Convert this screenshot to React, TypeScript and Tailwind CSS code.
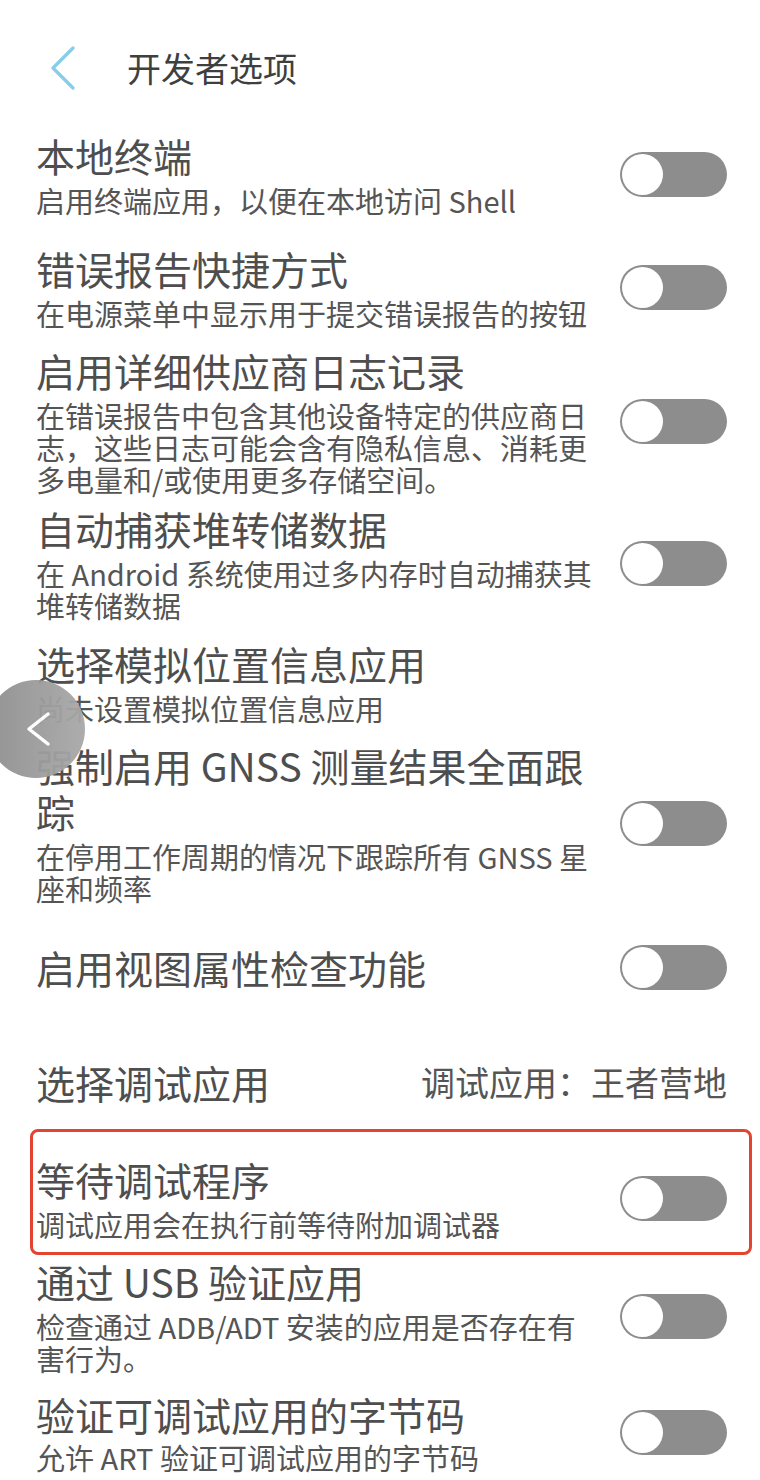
import React from "react";

const FONT = { fontFamily: '"Noto Sans CJK SC", "Noto Sans", sans-serif' };

function Toggle() {
  return (
    <div className="w-[107px] h-[45px] rounded-full bg-[#8d8d8d] flex items-center pl-[2px] shrink-0">
      <div className="w-[41px] h-[41px] rounded-full bg-white" />
    </div>
  );
}

function Row({ title, sub, toggle = true, subGap = "mt-[6px]" }: { title: string; sub?: string; toggle?: boolean; subGap?: string }) {
  return (
    <div className="flex items-center justify-between">
      <div className="w-[562px]">
        <div className="text-[39px] leading-[46px] text-[#4e4e4e]">{title}</div>
        {sub && (
          <div className={`${subGap} text-[29px] leading-[32px] text-[#555555]`}>{sub}</div>
        )}
      </div>
      {toggle && <Toggle />}
    </div>
  );
}

export default function App() {
  return (
    <div className="relative w-[760px] h-[1480px] bg-white overflow-hidden" style={FONT}>
      {/* header */}
      <div className="flex items-center h-[44px] mt-[46px] pl-[50px]">
        <svg width="26" height="44" viewBox="0 0 26 44" fill="none">
          <polyline points="23,2 3,22 23,42" stroke="#86cdea" strokeWidth="3.2" strokeLinecap="round" strokeLinejoin="round" />
        </svg>
        <div className="ml-[51px] text-[34px] leading-[44px] text-[#3f3f3f]">开发者选项</div>
      </div>

      <div className="pl-[36px] pr-[33px]">
        <div className="mt-[42px]">
          <Row title="本地终端" sub="启用终端应用，以便在本地访问 Shell" />
        </div>
        <div className="mt-[29px]">
          <Row title="错误报告快捷方式" sub="在电源菜单中显示用于提交错误报告的按钮" />
        </div>
        <div className="mt-[18px]">
          <Row
            title="启用详细供应商日志记录"
            sub="在错误报告中包含其他设备特定的供应商日志，这些日志可能会含有隐私信息、消耗更多电量和/或使用更多存储空间。"
          />
        </div>
        <div className="mt-[10px]">
          <Row title="自动捕获堆转储数据" sub="在 Android 系统使用过多内存时自动捕获其堆转储数据" />
        </div>
        <div className="mt-[19px]">
          <Row title="选择模拟位置信息应用" sub="尚未设置模拟位置信息应用" toggle={false} />
        </div>
        <div className="mt-[18px]">
          <Row title="强制启用 GNSS 测量结果全面跟踪" sub="在停用工作周期的情况下跟踪所有 GNSS 星座和频率" />
        </div>
        <div className="mt-[40px]">
          <Row title="启用视图属性检查功能" />
        </div>
        <div className="mt-[69px] flex items-center justify-between">
          <div className="text-[39px] leading-[46px] text-[#4e4e4e]">选择调试应用</div>
          <div className="text-[34px] leading-[46px] text-[#555555]">调试应用：王者营地</div>
        </div>
        <div className="mt-[24px] -ml-[6px] -mr-[25px] border-[3px] border-[#e2442f] rounded-[8px] pl-[3px] pr-[22px] pt-[24px] pb-[12px]">
          <Row title="等待调试程序" sub="调试应用会在执行前等待附加调试器" />
        </div>
        <div className="mt-[3px]">
          <Row title="通过 USB 验证应用" sub="检查通过 ADB/ADT 安装的应用是否存在有害行为。" />
        </div>
        <div className="mt-[17px]">
          <Row title="验证可调试应用的字节码" sub="允许 ART 验证可调试应用的字节码" subGap="mt-[4px]" />
        </div>
      </div>

      {/* floating back button */}
      <div className="absolute left-[-13px] top-[680px] w-[98px] h-[98px] rounded-full bg-gradient-to-r from-[#8e8e8e] to-[#a9a9a9] opacity-95 flex items-center justify-center">
        <svg width="28" height="36" viewBox="0 0 28 36" fill="none" className="ml-[4px]">
          <polyline points="24,3 5,18 24,33" stroke="#ffffff" strokeWidth="3.5" strokeLinecap="round" strokeLinejoin="round" />
        </svg>
      </div>
    </div>
  );
}
